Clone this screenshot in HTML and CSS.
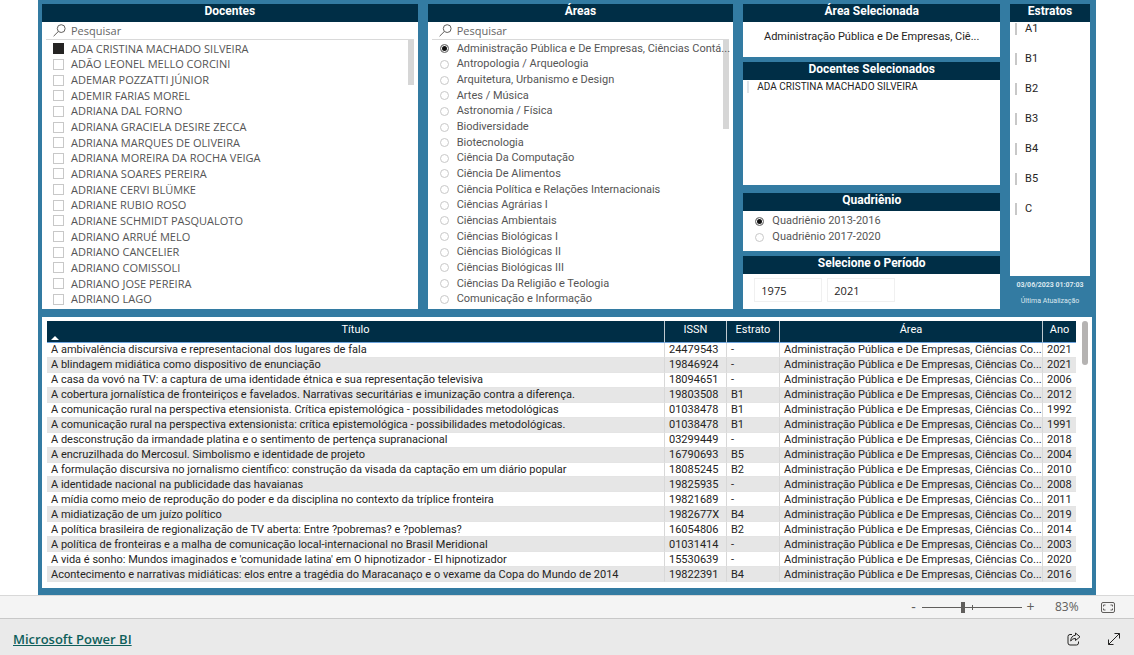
FILE: index.html
```html
<!DOCTYPE html>
<html lang="pt-BR">
<head>
<meta charset="utf-8">
<title>Microsoft Power BI</title>
<link rel="stylesheet" href="styles.css">
</head>
<body>
<main class="report">
  <div class="slicers">
    <section class="panel">
      <h2 class="panel-title">Docentes</h2>
      <div class="search">
        <svg class="search-icon" viewBox="0 0 13 13"><circle cx="8.2" cy="4.6" r="3.9"/><path d="M5.3 7.5L.6 12.2"/></svg>
        <input type="text" placeholder="Pesquisar" aria-label="Pesquisar docentes">
      </div>
      <div class="list">
        <label><input type="checkbox" checked>ADA CRISTINA MACHADO SILVEIRA</label>
        <label><input type="checkbox">ADÃO LEONEL MELLO CORCINI</label>
        <label><input type="checkbox">ADEMAR POZZATTI JÚNIOR</label>
        <label><input type="checkbox">ADEMIR FARIAS MOREL</label>
        <label><input type="checkbox">ADRIANA DAL FORNO</label>
        <label><input type="checkbox">ADRIANA GRACIELA DESIRE ZECCA</label>
        <label><input type="checkbox">ADRIANA MARQUES DE OLIVEIRA</label>
        <label><input type="checkbox">ADRIANA MOREIRA DA ROCHA VEIGA</label>
        <label><input type="checkbox">ADRIANA SOARES PEREIRA</label>
        <label><input type="checkbox">ADRIANE CERVI BLÜMKE</label>
        <label><input type="checkbox">ADRIANE RUBIO ROSO</label>
        <label><input type="checkbox">ADRIANE SCHMIDT PASQUALOTO</label>
        <label><input type="checkbox">ADRIANO ARRUÉ MELO</label>
        <label><input type="checkbox">ADRIANO CANCELIER</label>
        <label><input type="checkbox">ADRIANO COMISSOLI</label>
        <label><input type="checkbox">ADRIANO JOSE PEREIRA</label>
        <label><input type="checkbox">ADRIANO LAGO</label>
      </div>
    </section>

    <section class="panel">
      <h2 class="panel-title">Áreas</h2>
      <div class="search">
        <svg class="search-icon" viewBox="0 0 13 13"><circle cx="8.2" cy="4.6" r="3.9"/><path d="M5.3 7.5L.6 12.2"/></svg>
        <input type="text" placeholder="Pesquisar" aria-label="Pesquisar áreas">
      </div>
      <div class="list areas">
        <label><input type="radio" name="area" checked>Administração Pública e De Empresas, Ciências Contá...</label>
        <label><input type="radio" name="area">Antropologia / Arqueologia</label>
        <label><input type="radio" name="area">Arquitetura, Urbanismo e Design</label>
        <label><input type="radio" name="area">Artes / Música</label>
        <label><input type="radio" name="area">Astronomia / Física</label>
        <label><input type="radio" name="area">Biodiversidade</label>
        <label><input type="radio" name="area">Biotecnologia</label>
        <label><input type="radio" name="area">Ciência Da Computação</label>
        <label><input type="radio" name="area">Ciência De Alimentos</label>
        <label><input type="radio" name="area">Ciência Política e Relações Internacionais</label>
        <label><input type="radio" name="area">Ciências Agrárias I</label>
        <label><input type="radio" name="area">Ciências Ambientais</label>
        <label><input type="radio" name="area">Ciências Biológicas I</label>
        <label><input type="radio" name="area">Ciências Biológicas II</label>
        <label><input type="radio" name="area">Ciências Biológicas III</label>
        <label><input type="radio" name="area">Ciências Da Religião e Teologia</label>
        <label><input type="radio" name="area">Comunicação e Informação</label>
      </div>
    </section>

    <div class="stack">
      <section class="panel area-card">
        <h2 class="panel-title">Área Selecionada</h2>
        <p>Administração Pública e De Empresas, Ciê...</p>
      </section>
      <section class="panel teachers-card">
        <h2 class="panel-title">Docentes Selecionados</h2>
        <p>ADA CRISTINA MACHADO SILVEIRA</p>
      </section>
      <section class="panel term-card">
        <h2 class="panel-title">Quadriênio</h2>
        <div class="options">
          <label><input type="radio" name="term" checked>Quadriênio 2013-2016</label>
          <label><input type="radio" name="term">Quadriênio 2017-2020</label>
        </div>
      </section>
      <section class="panel period-card">
        <h2 class="panel-title">Selecione o Período</h2>
        <div class="period">
          <input type="text" value="1975" aria-label="Ano inicial">
          <input type="text" value="2021" aria-label="Ano final">
        </div>
      </section>
    </div>

    <div class="side">
      <section class="panel strata">
        <h2 class="panel-title">Estratos</h2>
        <div class="strata-list">
          <button type="button">A1</button>
          <button type="button">B1</button>
          <button type="button">B2</button>
          <button type="button">B3</button>
          <button type="button">B4</button>
          <button type="button">B5</button>
          <button type="button">C</button>
        </div>
      </section>
      <div class="updated"><strong>03/06/2023 01:07:03</strong><span>Última Atualização</span></div>
    </div>
  </div>

  <section class="results">
    <div class="table-area">
      <table>
        <colgroup><col><col class="c-issn"><col class="c-estrato"><col class="c-area"><col class="c-ano"></colgroup>
        <thead><tr><th class="sorted">Título</th><th>ISSN</th><th>Estrato</th><th>Área</th><th>Ano</th></tr></thead>
        <tbody>
          <tr><td>A ambivalência discursiva e representacional dos lugares de fala</td><td>24479543</td><td>-</td><td>Administração Pública e De Empresas, Ciências Co...</td><td>2021</td></tr>
          <tr><td>A blindagem midiática como dispositivo de enunciação</td><td>19846924</td><td>-</td><td>Administração Pública e De Empresas, Ciências Co...</td><td>2021</td></tr>
          <tr><td>A casa da vovó na TV: a captura de uma identidade étnica e sua representação televisiva</td><td>18094651</td><td>-</td><td>Administração Pública e De Empresas, Ciências Co...</td><td>2006</td></tr>
          <tr><td>A cobertura jornalística de fronteiriços e favelados. Narrativas securitárias e imunização contra a diferença.</td><td>19803508</td><td>B1</td><td>Administração Pública e De Empresas, Ciências Co...</td><td>2012</td></tr>
          <tr><td>A comunicação rural na perspectiva etensionista. Crítica epistemológica - possibilidades metodológicas</td><td>01038478</td><td>B1</td><td>Administração Pública e De Empresas, Ciências Co...</td><td>1992</td></tr>
          <tr><td>A comunicação rural na perspectiva extensionista: crítica epistemológica - possibilidades metodológicas.</td><td>01038478</td><td>B1</td><td>Administração Pública e De Empresas, Ciências Co...</td><td>1991</td></tr>
          <tr><td>A desconstrução da irmandade platina e o sentimento de pertença supranacional</td><td>03299449</td><td>-</td><td>Administração Pública e De Empresas, Ciências Co...</td><td>2018</td></tr>
          <tr><td>A encruzilhada do Mercosul. Simbolismo e identidade de projeto</td><td>16790693</td><td>B5</td><td>Administração Pública e De Empresas, Ciências Co...</td><td>2004</td></tr>
          <tr><td>A formulação discursiva no jornalismo científico: construção da visada da captação em um diário popular</td><td>18085245</td><td>B2</td><td>Administração Pública e De Empresas, Ciências Co...</td><td>2010</td></tr>
          <tr><td>A identidade nacional na publicidade das havaianas</td><td>19825935</td><td>-</td><td>Administração Pública e De Empresas, Ciências Co...</td><td>2008</td></tr>
          <tr><td>A mídia como meio de reprodução do poder e da disciplina no contexto da tríplice fronteira</td><td>19821689</td><td>-</td><td>Administração Pública e De Empresas, Ciências Co...</td><td>2011</td></tr>
          <tr><td>A midiatização de um juízo político</td><td>1982677X</td><td>B4</td><td>Administração Pública e De Empresas, Ciências Co...</td><td>2019</td></tr>
          <tr><td>A política brasileira de regionalização de TV aberta: Entre ?pobremas? e ?poblemas?</td><td>16054806</td><td>B2</td><td>Administração Pública e De Empresas, Ciências Co...</td><td>2014</td></tr>
          <tr><td>A política de fronteiras e a malha de comunicação local-internacional no Brasil Meridional</td><td>01031414</td><td>-</td><td>Administração Pública e De Empresas, Ciências Co...</td><td>2003</td></tr>
          <tr><td>A vida é sonho: Mundos imaginados e 'comunidade latina' em O hipnotizador - El hipnotizador</td><td>15530639</td><td>-</td><td>Administração Pública e De Empresas, Ciências Co...</td><td>2020</td></tr>
          <tr><td>Acontecimento e narrativas midiáticas: elos entre a tragédia do Maracanaço e o vexame da Copa do Mundo de 2014</td><td>19822391</td><td>B4</td><td>Administração Pública e De Empresas, Ciências Co...</td><td>2016</td></tr>
        </tbody>
      </table>
    </div>
    <div class="table-scroll"></div>
  </section>
</main>

<div class="zoombar">
  <button type="button" aria-label="Reduzir">-</button>
  <input class="zoom" type="range" min="0" max="100" value="41" aria-label="Zoom">
  <button type="button" aria-label="Ampliar">+</button>
  <span class="percent">83%</span>
  <button type="button" class="fit" aria-label="Ajustar à página">
    <svg viewBox="0 0 14 11"><rect x=".5" y=".5" width="13" height="10" rx="1.5"/><path d="M2.500 4.500V3H4.500M9.500 3H11.500V4.500M11.500 6.500V8H9.500M4.500 8H2.500V6.500"/></svg>
  </button>
</div>
<footer class="footer">
  <a href="#">Microsoft Power BI</a>
  <button type="button" aria-label="Compartilhar">
    <svg viewBox="0 0 14 14"><path d="M5 2.500H3Q1 2.500 1 4.500V11Q1 13 3 13H9.500Q11.500 13 11.500 11V9.500"/><path d="M8.500 1L13 4.800L8.500 8.500V6.400Q5.500 6.300 3.700 9Q4 3.700 8.500 3.200Z"/></svg>
  </button>
  <button type="button" aria-label="Tela inteira">
    <svg viewBox="0 0 14 14"><path d="M1.500 12.500L12.500 1.500M7.500 1.500H12.500V6.500M1.500 7.500V12.500H6.500"/></svg>
  </button>
</footer>
</body>
</html>
```

FILE: styles.css
```css
* { box-sizing: border-box; }

body {
  margin: 0;
  min-height: 100vh;
  display: flex;
  flex-direction: column;
  background: #fff;
  color: #252423;
  font: 11px/14px "Open Sans", "Noto Sans", sans-serif;
}

button, input { font: inherit; color: inherit; }
button { border: 0; padding: 0; background: none; cursor: pointer; }
svg { display: block; fill: none; stroke: currentColor; }
p, h2 { margin: 0; }

.report {
  flex: 1;
  display: flex;
  flex-direction: column;
  gap: 8px;
  margin: 0 38px;
  padding: 4px 4px 7px;
  background: #337ba2;
}

.slicers {
  flex: 305 0 0;
  display: grid;
  grid-template-columns: 376fr 306fr 257fr 80fr;
  column-gap: 10px;
  padding-right: 2px;
}

.panel {
  display: flex;
  flex-direction: column;
  min-width: 0;
  background: #fff;
}

.panel-title {
  height: 18px;
  background: #002e46;
  color: #fff;
  font: bold 12px/15px Roboto, sans-serif;
  text-align: center;
}

.search {
  display: flex;
  align-items: center;
  gap: 5px;
  height: 18px;
  margin: 0 4px;
  padding-left: 7px;
  border-bottom: 1px solid #d9d9d9;
  color: #605e5c;
}
.search-icon { width: 13px; height: 13px; }
.search input { flex: 1; min-width: 0; border: 0; padding: 0; outline: 0; background: none; }
.search input::placeholder { color: #666; opacity: 1; }

.list {
  flex: 1;
  display: grid;
  grid-auto-rows: 1fr;
  position: relative;
  margin-right: 4px;
  padding: 1px 0 2px;
}
.list::after {
  content: "";
  position: absolute;
  top: 0;
  right: 0;
  width: 6px;
  height: 45px;
  background: #d6d6d6;
}
.areas::after { height: 89px; z-index: -1; }
.areas { z-index: 0; }
.areas, .options { font-family: Roboto, sans-serif; }

.list label, .options label {
  display: flex;
  align-items: center;
  gap: 7px;
  padding-left: 11px;
  min-width: 0;
  color: #555;
  white-space: nowrap;
}

input[type="checkbox"], input[type="radio"] {
  appearance: none;
  flex: none;
  margin: 0;
  width: 11px;
  height: 11px;
  border: 1px solid #c8c8c8;
  background: #fff;
}
input[type="checkbox"]:checked { background: #252423; border-color: #252423; }
input[type="radio"] { width: 9px; height: 9px; margin: 0 1px; border-radius: 50%; }
input[type="radio"]:checked {
  border-color: #8a8a8a;
  background: #111;
  box-shadow: inset 0 0 0 1px #fff;
}

.stack { display: flex; flex-direction: column; min-width: 0; }
.area-card { min-height: 53px; margin-bottom: 5px; }
.area-card p { font: 11px/30px Roboto, sans-serif; text-align: center; white-space: nowrap; }
.teachers-card { flex: 1 0 auto; margin-bottom: 8px; }
.teachers-card p {
  margin: 1px 4px;
  padding-left: 8px;
  border-left: 2px solid #e1e4e8;
  font: 10px/12px Roboto, sans-serif;
}
.term-card { min-height: 58px; margin-bottom: 5px; }
.options { display: grid; grid-auto-rows: 16px; padding-top: 2px; }
.period-card { min-height: 53px; }
.period { display: flex; gap: 5px; padding: 4px 11px; }
.period input { width: 68px; height: 24px; padding: 2px 6px; border: 1px solid #f0f0f0; }

.side { display: flex; flex-direction: column; min-width: 0; }
.strata { flex: 1; }
.strata-list { display: flex; flex-direction: column; gap: 18px; padding: 1px 0 0 5px; }
.strata-list button {
  height: 12px;
  padding-left: 8px;
  border-left: 2px solid #c8c8c8;
  font: 11px/12px Roboto, sans-serif;
  text-align: left;
}
.updated {
  display: flex;
  flex-direction: column;
  align-items: center;
  gap: 4px;
  height: 33px;
  padding-top: 3px;
  color: #dbe8ef;
  font: 7px/12px Roboto, sans-serif;
  white-space: nowrap;
}

.results {
  flex: 263 0 0;
  display: flex;
  gap: 6px;
  padding: 4px 4px 4px 5px;
  background: #fff;
}
.table-area { flex: 1; min-width: 0; font-family: Roboto, sans-serif; }
table { width: 100%; height: 261px; border-collapse: separate; border-spacing: 0; table-layout: fixed; }
.c-issn { width: 62px; }
.c-estrato { width: 53px; }
.c-area { width: 263px; }
.c-ano { width: 34px; }

th {
  position: relative;
  height: 22px;
  padding: 0;
  vertical-align: top;
  background: #002e46;
  color: #fff;
  border-bottom: 1px solid #6da3dc;
  font-weight: normal;
  line-height: 17px;
}
th + th { border-left: 1px solid #bfc9cf; }
.sorted::after {
  content: "";
  position: absolute;
  left: 4px;
  bottom: 2px;
  border: 4px solid transparent;
  border-top: 0;
  border-bottom-color: #fff;
}
td {
  padding: 0 4px;
  border-bottom: 1px solid #e4e4e4;
  line-height: 13px;
  white-space: nowrap;
}
td + td { border-left: 1px solid #d8d8d8; }
tbody tr:nth-child(even) { background: #e6e6e6; }
.table-scroll { width: 6px; height: 44px; border-radius: 3px; background: #b5b3b2; }

.zoombar {
  display: flex;
  align-items: center;
  justify-content: flex-end;
  height: 24px;
  padding-right: 19px;
  border-top: 1px solid #d8d8d8;
  border-bottom: 1px solid #c8c8c8;
  background: #f4f4f4;
  color: #605e5c;
  font-size: 12px;
}
.zoombar button { width: 17px; font-size: 14px; }
.zoom {
  appearance: none;
  width: 100px;
  height: 12px;
  margin: 0;
  background:
    linear-gradient(#605e5c, #605e5c) 50px 4px / 1px 5px no-repeat,
    linear-gradient(#605e5c, #605e5c) 0 6px / 100% 1px no-repeat;
}
.zoom::-webkit-slider-thumb { appearance: none; width: 4px; height: 11px; background: #605e5c; }
.percent { width: 46px; margin-right: 16px; padding-left: 16px; }
.zoombar .fit { width: 14px; }
.fit svg { width: 14px; height: 11px; }

.footer {
  display: flex;
  align-items: center;
  gap: 26px;
  height: 36px;
  padding: 4px 13px 0;
  background: #eaeaea;
}
.footer a { margin-right: auto; color: #0f5f5b; font-size: 13px; font-weight: 600; line-height: 18px; }
.footer svg { width: 14px; height: 14px; }
```
